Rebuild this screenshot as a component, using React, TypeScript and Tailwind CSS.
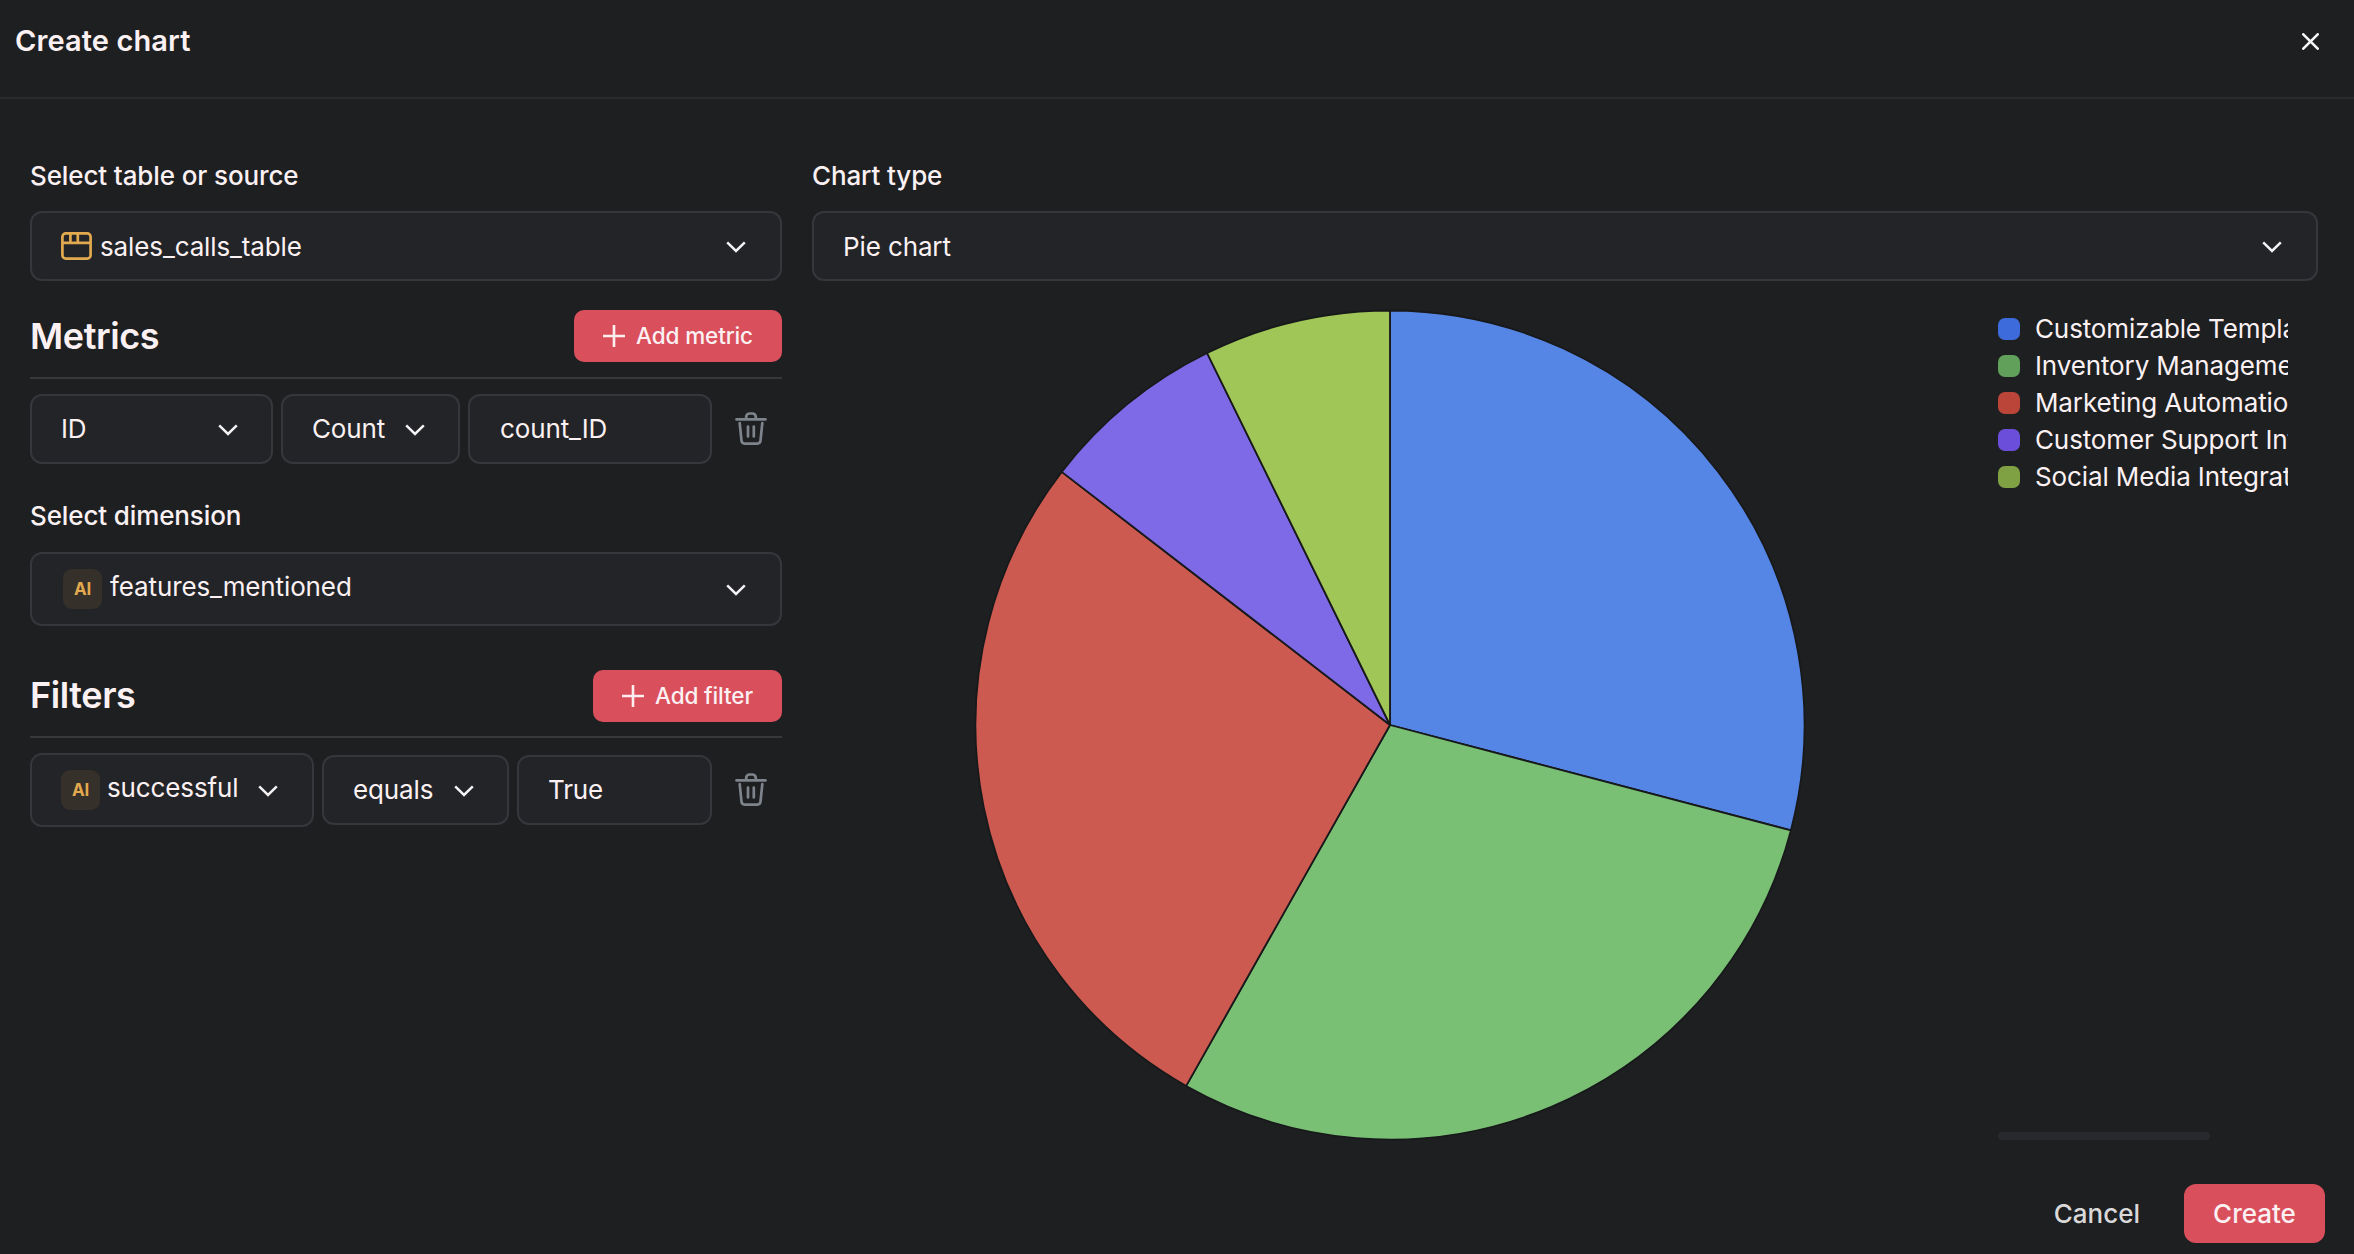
import React from "react";

const INTER = "font-['Inter',sans-serif]";

function Chevron() {
  return (
    <svg width="20" height="12" viewBox="0 0 20 12" fill="none" className="mt-[2px] shrink-0">
      <path d="M1.2 1.3 10 9.9l8.8-8.6" stroke="#f3f1f1" strokeWidth="2.5" />
    </svg>
  );
}

function TableIcon() {
  return (
    <svg width="31" height="28" viewBox="0 0 31 28" fill="none" stroke="#e2a94f" strokeWidth="2.7" className="shrink-0">
      <rect x="1.4" y="1.4" width="28.2" height="25.2" rx="3.4" />
      <path d="M1.4 10.9h28.2M9.4 1.4v9.5M16.8 1.4v9.5" />
    </svg>
  );
}

function Trash() {
  return (
    <svg width="32" height="34" viewBox="0 0 32 34" fill="none" stroke="#7d848c" strokeWidth="2.7" strokeLinecap="round" strokeLinejoin="round" className="shrink-0">
      <path d="M1.5 7.4h29M11.2 7.2V5a3.5 3.5 0 0 1 3.5-3.5h2.6A3.5 3.5 0 0 1 20.8 5v2.2" />
      <path d="M4.7 11.2l1.8 17.5a3.2 3.2 0 0 0 3.2 2.9h12.6a3.2 3.2 0 0 0 3.2-2.9l1.8-17.5" />
      <path d="M13 14.6v9.8M18.8 14.6v9.8" />
    </svg>
  );
}

function PlusIcon() {
  return (
    <svg width="22" height="22" viewBox="0 0 22 22" stroke="#fdeff0" strokeWidth="2.6" className="shrink-0">
      <path d="M11 0v22M0 11h22" />
    </svg>
  );
}

function AiTag() {
  return (
    <span className="flex h-[40px] w-[39px] shrink-0 items-center justify-center rounded-[9px] bg-[#353029] text-[17px] leading-none font-bold text-[#e2a94f]">
      AI
    </span>
  );
}

function Box({ className = "", children }: { className?: string; children: React.ReactNode }) {
  return (
    <div className={`flex shrink-0 items-center rounded-[12px] border-2 border-[#36373c] bg-[#232428] text-[26px] leading-[32px] ${className}`}>
      {children}
    </div>
  );
}

function SectionHead({ title, action, className, titleClass, buttonClass }: { title: string; action: string; className: string; titleClass: string; buttonClass: string }) {
  return (
    <div className={`flex items-start justify-between border-b-2 border-[#36383a] ${className}`}>
      <h2 className={`text-[36px] leading-[48px] font-semibold tracking-[-0.4px] ${titleClass}`}>{title}</h2>
      <button className={`flex h-[52px] items-center justify-end gap-[11px] rounded-[10px] bg-[#da4f5c] pr-[29px] text-[22.5px] font-medium whitespace-nowrap ${buttonClass}`}>
        <PlusIcon />
        {action}
      </button>
    </div>
  );
}

const TOTAL = 55;

const slices = [
  { label: "Customizable Templates", count: 16, fill: "#5686e5", swatch: "bg-[#3e6bdb]" },
  { label: "Inventory Management", count: 16, fill: "#79bf74", swatch: "bg-[#61a05b]" },
  { label: "Marketing Automation", count: 15, fill: "#cd5a50", swatch: "bg-[#bc4539]" },
  { label: "Customer Support Integration", count: 4, fill: "#7e6ae6", swatch: "bg-[#6b4fda]" },
  { label: "Social Media Integration", count: 4, fill: "#a0c657", swatch: "bg-[#80a044]" },
];

const RADIUS = 414.5;
const CENTER = 415;

function point(count: number) {
  const a = (count / TOTAL) * 2 * Math.PI;
  return `${CENTER + RADIUS * Math.sin(a)} ${CENTER - RADIUS * Math.cos(a)}`;
}

function Pie() {
  return (
    <svg width="831" height="831" viewBox="0 0 831 831" className="shrink-0 overflow-visible">
      {slices.map((s, i) => {
        const start = slices.slice(0, i).reduce((sum, x) => sum + x.count, 0);
        return (
          <path
            key={s.label}
            d={`M${CENTER} ${CENTER}L${point(start)}A${RADIUS} ${RADIUS} 0 0 1 ${point(start + s.count)}Z`}
            fill={s.fill}
            stroke="#18191b"
            strokeWidth="1.8"
            strokeLinejoin="round"
          />
        );
      })}
    </svg>
  );
}

export default function App() {
  return (
    <div className={`flex h-[1254px] w-[2354px] flex-col overflow-hidden bg-[#1e1f21] tracking-[-0.12px] text-[#fbf1f3] ${INTER}`}>
      <header className="flex h-[99px] shrink-0 items-start justify-between border-b-2 border-[#2a2b2e] pr-[35px] pl-[15px]">
        <h1 className="mt-[21px] text-[29px] leading-[40px] font-semibold tracking-[0.1px]">Create chart</h1>
        <svg width="17" height="17" viewBox="0 0 17 17" stroke="#f5f5f5" strokeWidth="2.6" strokeLinecap="round" className="mt-[33px]">
          <path d="M1.3 1.3l14.4 14.4M15.7 1.3L1.3 15.7" />
        </svg>
      </header>

      <main className="flex h-[1075px] shrink-0 gap-[30px] pt-[59px] pl-[30px]">
        <section className="flex w-[752px] shrink-0 flex-col">
          <label className="h-[53px] text-[26px] leading-[36px] font-medium">Select table or source</label>
          <Box className="h-[70px] pr-[34px] pl-[29px]">
            <TableIcon />
            <span className="mt-[2px] ml-[8px] flex-1">sales_calls_table</span>
            <Chevron />
          </Box>
          <div className="mt-[29px]">
            <SectionHead title="Metrics" action="Add metric" className="h-[69px]" titleClass="mt-[2px]" buttonClass="w-[208px]" />
          </div>
          <div className="mt-[15px] flex items-center gap-[8px]">
            <Box className="h-[70px] w-[243px] justify-between pr-[33px] pl-[29px]">
              ID
              <Chevron />
            </Box>
            <Box className="h-[70px] w-[179px] justify-between pr-[33px] pl-[29px]">
              Count
              <Chevron />
            </Box>
            <Box className="h-[70px] w-[244px] pl-[30px]">count_ID</Box>
            <div className="ml-[15px]">
              <Trash />
            </div>
          </div>
          <label className="mt-[34px] h-[54px] text-[26px] leading-[36px] font-medium">Select dimension</label>
          <Box className="h-[74px] pr-[34px] pl-[31px]">
            <AiTag />
            <span className="-mt-[4px] ml-[8px] flex-1">features_mentioned</span>
            <Chevron />
          </Box>
          <div className="mt-[44px]">
            <SectionHead title="Filters" action="Add filter" className="h-[68px]" titleClass="mt-[1px]" buttonClass="w-[189px]" />
          </div>
          <div className="mt-[15px] flex items-center gap-[8px]">
            <Box className="h-[74px] w-[284px] pr-[34px] pl-[29px]">
              <AiTag />
              <span className="-mt-[4px] ml-[7px] flex-1">successful</span>
              <Chevron />
            </Box>
            <Box className="h-[70px] w-[187px] justify-between pr-[33px] pl-[29px]">
              equals
              <Chevron />
            </Box>
            <Box className="h-[70px] w-[195px] pl-[29px]">True</Box>
            <div className="ml-[15px]">
              <Trash />
            </div>
          </div>
        </section>

        <section className="flex w-[1506px] shrink-0 flex-col">
          <label className="h-[53px] text-[26px] leading-[36px] font-medium">Chart type</label>
          <Box className="h-[70px] justify-between pr-[34px] pl-[29px]">
            <span className="mt-[1px]">Pie chart</span>
            <Chevron />
          </Box>
          <div className="mt-[29px] flex justify-between pr-[30px] pl-[163px]">
            <Pie />
            <div className="flex h-[830px] w-[290px] flex-col justify-between overflow-hidden">
              <ul>
                {slices.map((s) => (
                  <li key={s.label} className="flex h-[37px] items-center gap-[15px] text-[26px] leading-[37px] whitespace-nowrap">
                    <span className={`size-[22px] shrink-0 rounded-[7px] ${s.swatch}`} />
                    {s.label}
                  </li>
                ))}
              </ul>
              <div className="h-[8px] w-[212px] rounded-full bg-[#28292d]" />
            </div>
          </div>
        </section>
      </main>

      <footer className="flex h-[80px] shrink-0 items-start justify-end pt-[10px] pr-[29px] text-[26px] font-medium tracking-normal">
        <button className="mr-[44px] h-[59px] text-[#d9d9d9]">Cancel</button>
        <button className="h-[59px] w-[141px] rounded-[12px] bg-[#da4f5c]">Create</button>
      </footer>
    </div>
  );
}
